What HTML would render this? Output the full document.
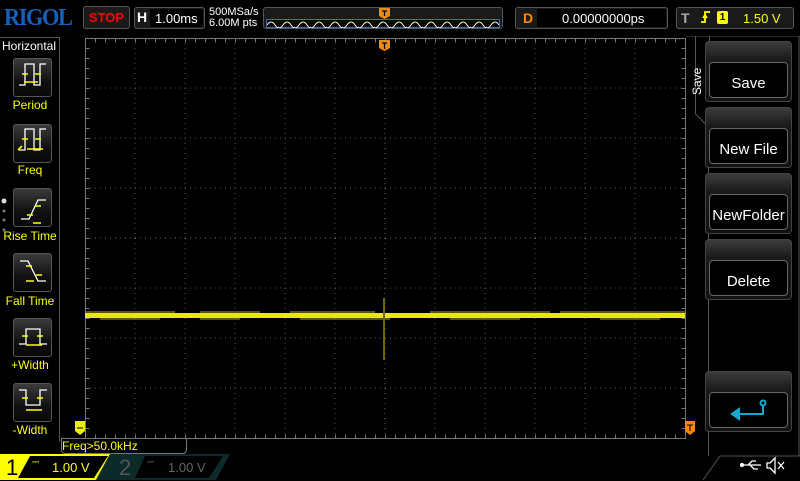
<!DOCTYPE html>
<html><head><style>
*{margin:0;padding:0;box-sizing:border-box}
body{width:800px;height:480px;background:#000;position:relative;overflow:hidden;font-family:"Liberation Sans",sans-serif;color:#fff}
.a{position:absolute}
.lb{position:absolute;left:13px;width:39px;height:39px;border-radius:3px;background:linear-gradient(#3a3a3a,#111 60%,#080808);border:1px solid #555}
.ll{position:absolute;left:0;width:60px;text-align:center;color:#ff0;font-size:12px}
.rb{position:absolute;left:705px;width:87px;height:61px;border:1px solid #444;border-radius:4px;background:linear-gradient(#3c3c3c,#1a1a1a 30%,#111)}
.rb .in{position:absolute;left:3px;right:3px;top:20px;bottom:3px;border:1px solid #666;border-radius:4px;background:#000;color:#fff;font-size:15px;text-align:center;line-height:42px}
</style></head><body>
<div class="a" style="left:4px;top:5px;font-family:'Liberation Serif',serif;font-weight:bold;font-size:24px;color:#1560b8;letter-spacing:-1.5px;transform:scaleX(0.93);transform-origin:left top">RIGOL</div>
<div class="a" style="left:83px;top:6px;width:47px;height:23px;border:1px solid #555;border-radius:3px;background:#1a1a1a;color:#f00;font-weight:bold;font-size:13px;text-align:center;line-height:21px">STOP</div>
<div class="a" style="left:134px;top:7px;width:71px;height:22px;border:1px solid #555;border-radius:3px;background:#1a1a1a"></div>
<div class="a" style="left:150px;top:9px;width:53px;height:18px;background:#000;border-radius:2px"></div>
<div class="a" style="left:137px;top:9px;font-weight:bold;font-size:14px">H</div>
<div class="a" style="left:155px;top:11px;font-size:13px">1.00ms</div>
<div class="a" style="left:209px;top:7px;font-size:11px;line-height:11px">500MSa/s<br>6.00M pts</div>
<div class="a" style="left:263px;top:7px;width:240px;height:22px;border:1px solid #555;border-radius:3px;background:#1a1a1a"></div>
<div class="a" style="left:266px;top:19px;width:234px;height:9px;border:1px solid #3a6ea5;background:#000"></div>
<svg class="a" style="left:267px;top:19px" width="232" height="9"><path d="M0 6 q4 -6 8 0 t8 0 t8 0 t8 0 t8 0 t8 0 t8 0 t8 0 t8 0 t8 0 t8 0 t8 0 t8 0 t8 0 t8 0 t8 0 t8 0 t8 0 t8 0 t8 0 t8 0 t8 0 t8 0 t8 0 t8 0 t8 0 t8 0 t8 0 t8 0" stroke="#fff" fill="none" stroke-width="1"/></svg>
<svg class="a" style="left:379px;top:8px" width="12" height="12"><path d="M0 0h11v8l-5.5 3l-5.5-3z" fill="#f80"/><path d="M3 3h5M5.5 3v5" stroke="#000" stroke-width="1.3"/></svg>
<div class="a" style="left:515px;top:7px;width:153px;height:22px;border:1px solid #555;border-radius:3px;background:#1a1a1a"></div>
<div class="a" style="left:537px;top:9px;width:129px;height:18px;background:#000"></div>
<div class="a" style="left:523px;top:10px;color:#f80;font-weight:bold;font-size:14px">D</div>
<div class="a" style="left:562px;top:11px;font-size:13px">0.00000000ps</div>
<div class="a" style="left:676px;top:7px;width:118px;height:22px;border:1px solid #555;border-radius:3px;background:#1a1a1a"></div>
<div class="a" style="left:681px;top:10px;color:#aaa;font-weight:bold;font-size:14px">T</div>
<svg class="a" style="left:700px;top:11px" width="12" height="14"><path d="M1 11h4V1h5M3 7l2-3 2 3" stroke="#ff0" fill="none" stroke-width="1.8"/></svg>
<div class="a" style="left:717px;top:11px;width:11px;height:13px;background:#ff0;border-radius:2px;color:#000;font-size:10px;font-weight:bold;text-align:center;line-height:13px">1</div>
<div class="a" style="left:743px;top:11px;color:#ff0;font-size:13px">1.50 V</div>
<div class="a" style="left:0;top:37px;width:60px;height:405px;border-right:1px solid #555;border-top:1px solid #555"></div>
<div class="a" style="left:2px;top:39px;font-size:12px">Horizontal</div>
<div class="lb" style="top:58px"></div><div class="ll" style="top:98px">Period</div>
<div class="lb" style="top:124px"></div><div class="ll" style="top:163px">Freq</div>
<div class="lb" style="top:188px"></div><div class="ll" style="top:229px">Rise Time</div>
<div class="lb" style="top:253px"></div><div class="ll" style="top:294px">Fall Time</div>
<div class="lb" style="top:318px"></div><div class="ll" style="top:358px">+Width</div>
<div class="lb" style="top:383px"></div><div class="ll" style="top:423px">-Width</div>
<svg class="a" style="left:0;top:0" width="60" height="440" fill="none" stroke-width="1.3">
<g stroke="#fff"><path d="M19 85h6V64h9v21h6V64h6"/><path d="M19 150h6v-21h9v21h6v-21h6"/><path d="M21 219h8l9-19h8"/><path d="M20 261h8l10 20h8"/><path d="M19 344h7v-15h14v15h7"/><path d="M19 390h7v15h14v-15h7"/></g>
<g stroke="#ff0" stroke-width="1.6"><path d="M22 74h6M35 74h6M24 82h14"/><path d="M22 139h6M35 139h6M27 149h16M18 150l4-4"/><path d="M27 215h6M35 206h6M33 223h8"/><path d="M26 266h6M36 275h6M26 281h8"/><path d="M22 336h6M37 336h6M26 345h16"/><path d="M22 398h6M37 398h6M26 410h16"/></g>
<g stroke="none"><circle cx="4" cy="201" r="2.5" fill="#ddd"/><circle cx="4" cy="211" r="1.5" fill="#777"/><circle cx="4" cy="220" r="1.5" fill="#777"/><circle cx="4" cy="230" r="1.5" fill="#777"/></g>
</svg>
<svg class="a" style="left:0;top:0" width="800" height="480">
<rect x="85.5" y="38.5" width="600" height="400" fill="none" stroke="#777"/>
<g stroke="#555" stroke-dasharray="1 4">
<path d="M135 38v400M185 38v400M235 38v400M285 38v400M335 38v400M385 38v400M435 38v400M485 38v400M535 38v400M585 38v400M635 38v400"/>
<path d="M85 88h600M85 138h600M85 188h600M85 238h600M85 288h600M85 338h600M85 388h600"/>
</g>
<g stroke="#777" stroke-width="4" stroke-dasharray="1 9"><path d="M85 40.5h600M85 436.5h600"/><path d="M87.5 38v400M683.5 38v400"/></g>
<g stroke="#777" stroke-dasharray="1 9"><path d="M380 238h10M385 38v400M85 238h600"/></g>
<rect x="85" y="313" width="600" height="5" fill="#e8e800"/>
<path d="M85 312h90M200 312h60M290 312h85M430 312h120M560 312h125M100 319h60M200 319h40M300 319h90M450 319h70M600 319h60" stroke="#b0b000"/>
<path d="M384 298v62" stroke="#6a6a00" stroke-width="2"/>
<path d="M379 40h11v8l-5.5 3l-5.5-3z" fill="#f80"/><path d="M382 43h5M384.5 43v6" stroke="#000" stroke-width="1.3"/>
<path d="M75 421h10v10l-5 4l-5-4z" fill="#ee0"/><path d="M77 428h6" stroke="#000"/>
<path d="M685 421h10v10l-5 4l-5-4z" fill="#f80"/><path d="M687 425h6M690 425v6" stroke="#000"/>
<path d="M61 438.5h25" stroke="#777"/>
</svg>
<div class="a" style="left:61px;top:438px;width:126px;height:16px;border:1px solid #777;border-radius:0 0 4px 4px;border-top:none"></div>
<div class="a" style="left:62px;top:439px;color:#ff0;font-size:12px">Freq&gt;50.0kHz</div>
<svg class="a" style="left:686px;top:36px" width="114" height="420" fill="none" stroke="#555"><path d="M23.5 0v16M9.5 0v78l13 13v329M0 0h114M113 0v420"/></svg>
<div class="a" style="font-size:12px;transform:rotate(-90deg);transform-origin:left top;top:95px;left:690px">Save</div>
<div class="rb" style="top:41px"><div class="in">Save</div></div>
<div class="rb" style="top:107px"><div class="in">New File</div></div>
<div class="rb" style="top:173px"><div class="in">NewFolder</div></div>
<div class="rb" style="top:239px"><div class="in">Delete</div></div>
<div class="rb" style="top:371px"><div class="in"></div></div>
<svg class="a" style="left:730px;top:398px" width="40" height="24" fill="none" stroke="#1ac" stroke-width="2"><path d="M33 7v9H6"/><circle cx="33" cy="5" r="2.5"/><path d="M2 16l7-5v10z" fill="#1ac"/></svg>
<svg class="a" style="left:0;top:454px" width="800" height="26">
<path d="M0 0h110L96 26H0z" fill="#ff0"/>
<path d="M30 2h78L94 24H18z" fill="#000"/>
<path d="M110 0h120L216 26H96z" fill="#0d2a2a"/>
<path d="M145 2h78L209 24H135z" fill="#000"/>
<path d="M720 2h80M720 2L703 26" stroke="#555" fill="none"/>
</svg>
<div class="a" style="left:6px;top:455px;color:#000;font-size:22px">1</div>
<div class="a" style="left:32px;top:457px;color:#ff0;font-size:9px">⎓</div>
<div class="a" style="left:52px;top:460px;color:#ff0;font-size:13px">1.00 V</div>
<div class="a" style="left:119px;top:455px;color:#555;font-size:22px">2</div>
<div class="a" style="left:147px;top:457px;color:#666;font-size:9px">⎓</div>
<div class="a" style="left:168px;top:460px;color:#666;font-size:13px">1.00 V</div>
<svg class="a" style="left:740px;top:456px" width="46" height="20" fill="none" stroke="#fff" stroke-width="1.3"><path d="M1 9h20M8 9l4-4h4M10 9l4 4h4"/><circle cx="2" cy="9" r="1.5" fill="#fff"/><path d="M27 7h3l5-5v15l-5-5h-3zM38 6l6 7M44 6l-6 7"/></svg>
</body></html>
